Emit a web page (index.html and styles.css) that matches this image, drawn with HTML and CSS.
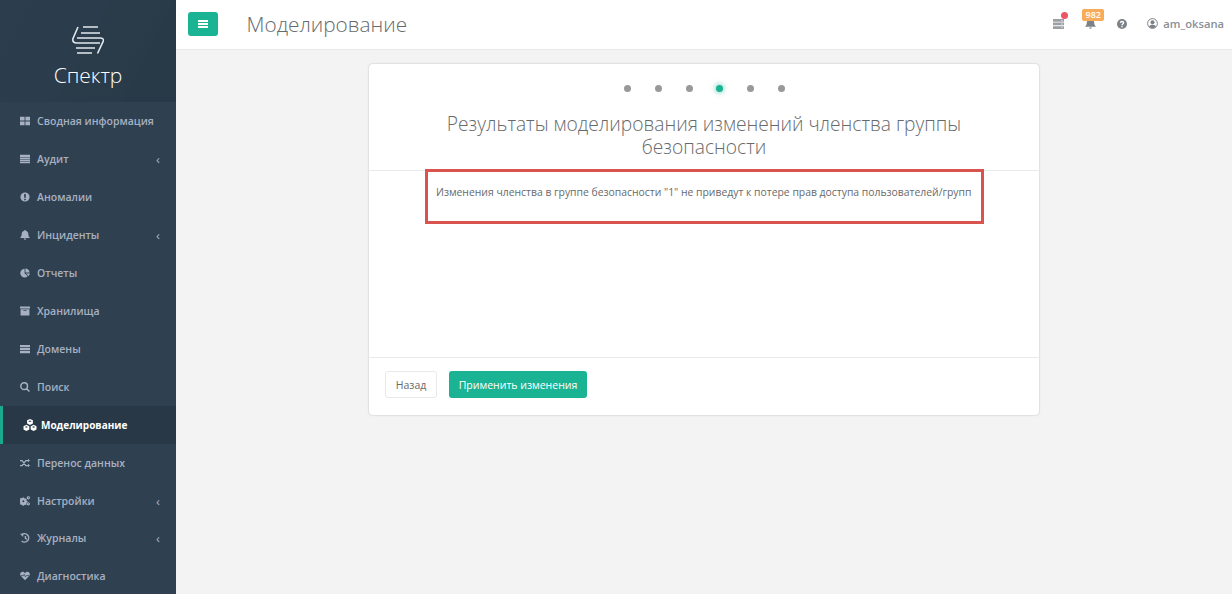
FILE: index.html
```html
<!DOCTYPE html>
<html lang="ru">
<head>
<meta charset="utf-8">
<title>Моделирование</title>
<link rel="stylesheet" href="styles.css">
</head>
<body>
<div class="app">
  <aside class="sidebar">
    <div class="brand">
      <svg class="logo" width="32" height="28" viewBox="0 0 32 28" fill="none" stroke="#e3e8ec" stroke-width="1.600">
        <path d="M11 1H26M6 1L1 12.500Q0 17 5 17H28M9 7H28M5 12H28Q32 12 31.300 15L25.500 27.500M4 22H23M5 27H20" />
      </svg>
      <div class="brand-name">Спектр</div>
    </div>
    <nav class="nav">
      <a class="item"><svg class="ic" viewBox="0 0 12 12"><path d="M0 1h5.500v4.500H0zM6.500 1H12v4.500H6.500zM0 6.500h5.500V11H0zM6.500 6.500H12V11H6.500z"/></svg><span class="lbl">Сводная информация</span></a>
      <a class="item"><svg class="ic" viewBox="0 0 12 12"><path d="M0 1h12v2.500H0zM0 4.200h12v2H0zM0 6.900h12v2H0zM0 9.600h12V11H0z"/></svg><span class="lbl">Аудит</span><span class="chev">‹</span></a>
      <a class="item"><svg class="ic" viewBox="0 0 12 12"><path fill-rule="evenodd" d="M6 .5a5.500 5.500 0 1 1 0 11 5.500 5.500 0 0 1 0-11zM5 2.500v4.500h2V2.500zM5 8v1.800h2V8z"/></svg><span class="lbl">Аномалии</span></a>
      <a class="item"><svg class="ic" viewBox="0 0 12 12"><path d="M6 0a1 1 0 0 1 1 1c2 .5 3 2 3 4 0 2.500 1 3.500 2 4.500H0c1-1 2-2 2-4.500 0-2 1-3.500 3-4A1 1 0 0 1 6 0zM4.500 10.300h3a1.500 1.500 0 0 1-3 0z"/></svg><span class="lbl">Инциденты</span><span class="chev">‹</span></a>
      <a class="item"><svg class="ic" viewBox="0 0 12 12"><path d="M5.500 1v5.200l3.700 3.700A5.200 5.200 0 1 1 5.500 1zM6.500.5a5 5 0 0 1 5 5h-5zM7 6.500h4.800a5 5 0 0 1-1.700 3z"/></svg><span class="lbl">Отчеты</span></a>
      <a class="item"><svg class="ic" viewBox="0 0 12 12"><path fill-rule="evenodd" d="M0 .5h12V3H0zM.7 3.800h10.600V11.500H.7zM4 5v1h4V5z"/></svg><span class="lbl">Хранилища</span></a>
      <a class="item"><svg class="ic" viewBox="0 0 12 12"><path d="M0 1.200h12v2.600H0zM0 4.800h12v2.600H0zM0 8.400h12V11H0z"/></svg><span class="lbl">Домены</span></a>
      <a class="item"><svg class="ic" viewBox="0 0 12 12"><path fill="none" stroke-width="1.800" d="M5 1a4 4 0 1 1 0 8 4 4 0 0 1 0-8zM8 8l3.300 3.300"/></svg><span class="lbl">Поиск</span></a>
      <a class="item active"><svg class="ic ic-wide" viewBox="0 0 14 12"><path fill-rule="evenodd" d="M7 0l2.900 1.300v3.200L7 6 4.100 4.500V1.300zM7 1.500L5.400 2.200 7 3l1.600-.8z"/><path fill-rule="evenodd" d="M3.400 5.800l2.900 1.400v3.300L3.400 12 .5 10.500V7.200zM3.400 7.200l-1.500.7 1.500.8 1.500-.8z"/><path fill-rule="evenodd" d="M10.600 5.800l2.900 1.400v3.300L10.600 12l-2.900-1.500V7.200zM10.600 7.200l-1.500.7 1.500.8 1.500-.8z"/></svg><span class="lbl">Моделирование</span></a>
      <a class="item"><svg class="ic" viewBox="0 0 12 12"><path fill="none" stroke-width="1.500" d="M0 3h2.500l4.500 6h2.500M0 9h2.500l4.500-6h2.500"/><path d="M9.500 .8L12 3 9.500 5.200zM9.500 6.800L12 9l-2.500 2.200z"/></svg><span class="lbl">Перенос данных</span></a>
      <a class="item"><svg class="ic" viewBox="0 0 12 12"><path fill-rule="evenodd" d="M3.200 1.800h1.600l.3 1 1 .4.900-.5 1.100 1.100-.5.900.4 1 1 .3v1.600l-1 .3-.4 1 .5.900-1.100 1.100-.9-.5-1 .4-.3 1H3.200l-.3-1-1-.4-.9.500L-.1 9.300l.5-.9-.4-1-1-.3V5.500l1-.3.4-1-.5-.9L1 2.200l.9.500 1-.4zM4 5a1.200 1.200 0 1 0 0 2.400A1.200 1.200 0 0 0 4 5z"/><path fill="none" stroke-width="1.300" d="M10 .8a1.300 1.300 0 1 1 0 2.600 1.300 1.300 0 0 1 0-2.600zM10 8a1.300 1.300 0 1 1 0 2.600A1.300 1.300 0 0 1 10 8z"/></svg><span class="lbl">Настройки</span><span class="chev">‹</span></a>
      <a class="item item-short"><svg class="ic" viewBox="0 0 12 12"><path fill="none" stroke-width="1.700" d="M2 2.300A5 5 0 1 1 2 9.500M6.500 3.500V6.300L8.500 7.500"/><path d="M0 1h3.800v3.800z"/></svg><span class="lbl">Журналы</span><span class="chev">‹</span></a>
      <a class="item"><svg class="ic" viewBox="0 0 12 12"><path d="M6 11L.8 5.800C-.8 3.500 1 1 3.200 1 4.500 1 5.400 1.800 6 2.700 6.600 1.800 7.500 1 8.800 1 11 1 12.800 3.500 11.200 5.800z"/><path fill="none" stroke="#2f4050" stroke-width=".9" d="M1 5.600h3L5 4l1.500 3 1-1.400H11"/></svg><span class="lbl">Диагностика</span></a>
    </nav>
  </aside>
  <div class="main">
    <header class="topbar">
      <button class="menu-btn"><svg width="10" height="8" viewBox="0 0 10 8" fill="#fff"><path d="M0 0h10v2H0zM0 3h10v2H0zM0 6h10v2H0z"/></svg></button>
      <h1 class="page-title">Моделирование</h1>
      <div class="tools">
        <span class="tool tool-list">
          <svg width="11" height="10" viewBox="0 0 11 10" fill="#9a9fa5"><path d="M0 0h11v2.700H0zM0 3.600h11v2.700H0zM0 7.200h11V10H0z"/><path fill="#fff" d="M8.500 1h1v.8h-1zM8.500 4.600h1v.8h-1zM8.500 8.200h1V9h-1z"/></svg>
          <i class="dot-red"></i>
        </span>
        <span class="tool tool-bell">
          <svg width="11" height="11" viewBox="0 0 12 12" fill="#7d8289"><path d="M6 0a1 1 0 0 1 1 1c2 .5 3 2 3 4 0 2.500 1 3.500 2 4.500H0c1-1 2-2 2-4.500 0-2 1-3.500 3-4A1 1 0 0 1 6 0zM4.500 10.300h3a1.500 1.500 0 0 1-3 0z"/></svg>
          <b class="badge">982</b>
        </span>
        <span class="tool tool-help">
          <svg width="10" height="10" viewBox="0 0 10 10"><circle cx="5" cy="5" r="5" fill="#7d8289"/><path fill="none" stroke="#fff" stroke-width="1.300" d="M3.400 3.900C3.500 2.900 4.200 2.500 5 2.500c.9 0 1.600.5 1.600 1.300 0 1.200-1.600 1.100-1.600 2.400"/><path fill="#fff" d="M4.300 7h1.400v1.200H4.300z"/></svg>
        </span>
        <span class="user">
          <svg width="11" height="11" viewBox="0 0 11 11"><circle cx="5.500" cy="5.500" r="4.900" fill="#fff" stroke="#7d8289" stroke-width="1"/><circle cx="5.500" cy="4.300" r="2" fill="#7d8289"/><path fill="#7d8289" d="M2 8.600c.5-1.500 2-1.900 3.500-1.900s3 .4 3.500 1.900C8 9.700 6.800 10.200 5.500 10.200S3 9.700 2 8.600z"/></svg>
          <span class="user-name">am_oksana</span>
        </span>
      </div>
    </header>
    <section class="content">
      <div class="card">
        <div class="card-head">
          <div class="steps">
            <i class="step"></i><i class="step"></i><i class="step"></i><i class="step on"></i><i class="step"></i><i class="step"></i>
          </div>
          <h2 class="card-title">Результаты моделирования изменений членства группы безопасности</h2>
        </div>
        <div class="card-body">
          <p class="result">Изменения членства в группе безопасности "1" не приведут к потере прав доступа пользователей/групп</p>
        </div>
        <div class="card-foot">
          <button class="btn btn-back">Назад</button>
          <button class="btn btn-apply">Применить изменения</button>
        </div>
        <div class="highlight"></div>
      </div>
    </section>
  </div>
</div>
</body>
</html>
```
FILE: styles.css
```css
* { box-sizing: border-box; }
html, body { margin: 0; height: 100%; overflow: hidden; }
body { font-family: "Open Sans", "Liberation Sans", sans-serif; color: #676a6c; background: #f3f3f4; }
.app { display: flex; height: 594px; overflow: hidden; }

.sidebar { width: 176px; flex: none; background: #2f4050; }
.brand {
  height: 102px;
  display: flex;
  flex-direction: column;
  align-items: center;
  padding-top: 26px;
  background: linear-gradient(118deg, #2c3e4e 0%, #2b3c4c 48%, #2a3b4a 48%, #293a49 76%, #283947 76%, #283947 100%);
}
.logo { display: block; margin-left: 0; }
.brand-name { color: #fff; font-size: 21px; font-weight: 300; line-height: 28px; margin-top: 7px; }

.nav { display: flex; flex-direction: column; }
.item {
  height: 38px;
  flex: none;
  display: flex;
  align-items: center;
  padding: 0 0 1px 20px;
  color: #a7b1c2;
  font-size: 10.500px;
  font-weight: 600;
  position: relative;
}
.item-short { height: 37px; }
.ic { width: 10px; height: 10px; flex: none; margin-right: 7px; fill: #a7b1c2; stroke: none; }
.ic path[fill="none"] { stroke: #a7b1c2; }
.ic path[stroke="#2f4050"] { stroke: #2f4050; }
.lbl { flex: 1; white-space: nowrap; }
.chev { width: 10px; margin-right: 13px; font-size: 13px; line-height: 12px; font-weight: 400; text-align: center; }
.item.active { background: #293846; color: #fff; border-left: 3px solid #19aa8d; padding-left: 20px; font-size: 10px; font-weight: 700; }
.item.active .ic { fill: #fff; }
.item.active .ic-wide { width: 14px; height: 12px; margin-right: 4px; }

.main { flex: 1; min-width: 0; display: flex; flex-direction: column; }
.topbar {
  height: 50px;
  flex: none;
  background: #fff;
  border-bottom: 1px solid #e7eaec;
  display: flex;
  align-items: center;
  padding: 0 8px 2px 12px;
}
.menu-btn {
  width: 30px;
  height: 24px;
  padding: 0;
  border: 0;
  border-radius: 3px;
  background: #1ab394;
  display: flex;
  align-items: center;
  justify-content: center;
}
.page-title { margin: 0 0 0 28.500px; font-size: 20.800px; font-weight: 300; color: #676a6c; line-height: 26px; }
.tools { margin-left: auto; display: flex; align-items: center; }
.tool { position: relative; display: flex; }
.tool-list { margin-right: 21px; }
.dot-red { position: absolute; left: 7.500px; top: -6.500px; width: 7px; height: 7px; border-radius: 50%; background: #ed5565; }
.tool-bell { margin-right: 21px; }
.badge {
  position: absolute;
  left: -3px;
  top: -9px;
  width: 22px;
  height: 12px;
  border-radius: 2px;
  background: #f8ac59;
  color: #fff;
  font-size: 9px;
  font-weight: 600;
  line-height: 12px;
  text-align: center;
}
.tool-help { margin-right: 20px; }
.user { display: flex; align-items: center; gap: 5px; }
.user-name { font-size: 11.200px; font-weight: 600; color: #8a9097; }

.content { flex: 1; padding: 14px 0 0 193px; }
.card {
  position: relative;
  width: 670px;
  height: 351px;
  background: #fff;
  border-radius: 4px;
  box-shadow: 0 0 2px rgba(0,0,0,.25);
  display: flex;
  flex-direction: column;
}
.card-head { height: 107px; flex: none; border-bottom: 1px solid #e7eaec; padding-top: 21px; }
.steps { display: flex; justify-content: center; gap: 23.900px; height: 8px; padding-left: 1px; }
.step { width: 7px; height: 7px; border-radius: 50%; background: #999; }
.step.on { background: #1ab394; box-shadow: 0 0 5px 1px rgba(26,179,148,.5); }
.card-title { margin: 19px auto 0; width: 570px; text-align: center; font-size: 19.200px; font-weight: 300; line-height: 23px; color: #676a6c; }
.card-body { flex: 1; padding: 14px 0 0 67px; }
.result { margin: 0; font-size: 10.400px; line-height: 14px; white-space: nowrap; color: #676a6c; }
.card-foot { height: 58px; flex: none; border-top: 1px solid #e7eaec; padding: 13px 16px 0; display: flex; align-items: flex-start; gap: 12px; }
.btn { height: 27px; padding: 0; border-radius: 3px; font-family: inherit; font-size: 10.500px; font-weight: 400; }
.btn-back { width: 52px; background: #fff; border: 1px solid #e7eaec; color: #676a6c; }
.btn-apply { width: 138px; background: #1ab394; border: 0; color: #fff; }
.highlight { position: absolute; left: 56px; top: 105px; width: 559px; height: 55px; border: 3.500px solid #d9534f; pointer-events: none; }
```
